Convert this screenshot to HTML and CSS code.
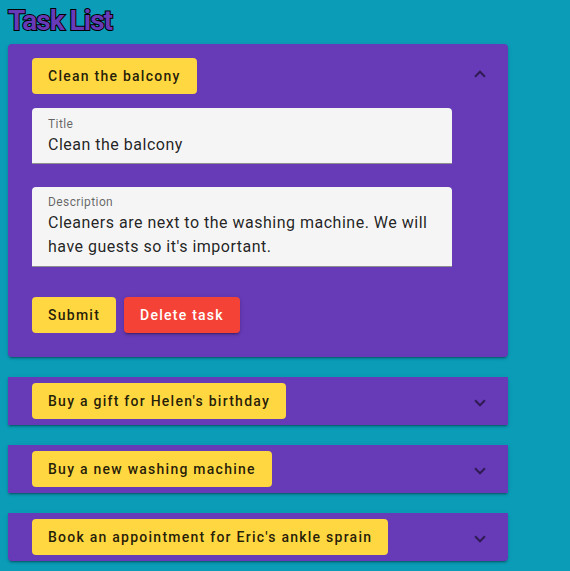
FILE: index.html
```html
<!DOCTYPE html>
<html lang="en">
<head>
<meta charset="utf-8">
<title>Task List</title>
<link rel="stylesheet" href="styles.css">
</head>
<body>
<h1 class="page-title">Task List</h1>
<div class="accordion">
  <section class="panel panel-expanded">
    <header class="panel-header panel-header-expanded">
      <button class="btn btn-accent">Clean the balcony</button>
      <span class="indicator indicator-up"></span>
    </header>
    <div class="panel-body">
      <div class="field field-input">
        <span class="field-label">Title</span>
        <div class="field-value">Clean the balcony</div>
      </div>
      <div class="field field-area">
        <span class="field-label">Description</span>
        <div class="field-value">Cleaners are next to the washing machine. We will have guests so it's important.</div>
      </div>
      <div class="actions">
        <button class="btn btn-accent">Submit</button>
        <button class="btn btn-warn">Delete task</button>
      </div>
    </div>
  </section>
  <section class="panel">
    <header class="panel-header">
      <button class="btn btn-accent">Buy a gift for Helen's birthday</button>
      <span class="indicator"></span>
    </header>
  </section>
  <section class="panel">
    <header class="panel-header">
      <button class="btn btn-accent">Buy a new washing machine</button>
      <span class="indicator"></span>
    </header>
  </section>
  <section class="panel panel-last">
    <header class="panel-header">
      <button class="btn btn-accent">Book an appointment for Eric's ankle sprain</button>
      <span class="indicator"></span>
    </header>
  </section>
</div>
</body>
</html>
```

FILE: styles.css
```css
html, body {
  margin: 0;
  padding: 0;
}
body {
  background: #0b9db8;
  padding: 8px;
  font-family: Roboto, "Liberation Sans", Arial, sans-serif;
}
.page-title {
  margin: 0 0 10px 0;
  font-size: 28px;
  line-height: 26px;
  font-weight: 700;
  color: #673ab7;
  -webkit-text-stroke: 2px #000;
  paint-order: stroke fill;
  letter-spacing: -1px;
}
.accordion {
  width: 500px;
  display: flex;
  flex-direction: column;
  gap: 20px;
}
.panel {
  background: #673ab7;
  box-shadow: 0 3px 1px -2px rgba(0,0,0,.2), 0 2px 2px 0 rgba(0,0,0,.14), 0 1px 5px 0 rgba(0,0,0,.12);
}
.panel-expanded {
  border-radius: 4px;
}
.panel-last {
  border-radius: 0 0 4px 4px;
}
.panel-header {
  height: 48px;
  padding: 0 24px;
  display: flex;
  align-items: center;
  justify-content: space-between;
}
.panel-header-expanded {
  height: 64px;
}
.indicator {
  width: 6px;
  height: 6px;
  border-style: solid;
  border-color: rgba(0,0,0,.54);
  border-width: 0 2px 2px 0;
  transform: rotate(45deg);
}
.indicator-up {
  transform: rotate(225deg);
}
.btn {
  font-family: Roboto, "Liberation Sans", Arial, sans-serif;
  font-size: 14px;
  font-weight: 500;
  letter-spacing: 1.25px;
  height: 36px;
  line-height: 36px;
  padding: 0 16px;
  border: none;
  border-radius: 4px;
  cursor: pointer;
}
.btn-accent {
  background: #ffd740;
  color: rgba(0,0,0,.87);
}
.btn-warn {
  background: #f44336;
  color: #fff;
  box-shadow: 0 3px 1px -2px rgba(0,0,0,.2), 0 2px 2px 0 rgba(0,0,0,.14), 0 1px 5px 0 rgba(0,0,0,.12);
}
.panel-body {
  padding: 0 24px 24px;
}
.field {
  width: 420px;
  box-sizing: border-box;
  background: #f5f5f5;
  border-radius: 4px 4px 0 0;
  border-bottom: 1px solid rgba(0,0,0,.42);
}
.field-input {
  padding: 8px 16px 6px;
}
.field-area {
  padding: 7px 16px 7px;
}
.field + .field {
  margin-top: 23px;
}
.field-label {
  display: block;
  font-size: 12px;
  line-height: 16px;
  letter-spacing: 0.4px;
  color: rgba(0,0,0,.6);
}
.field-value {
  margin-top: 1px;
  font-size: 16px;
  line-height: 24px;
  letter-spacing: 0.5px;
  color: rgba(0,0,0,.87);
}
.actions {
  margin-top: 30px;
  display: flex;
  gap: 8px;
}
```
